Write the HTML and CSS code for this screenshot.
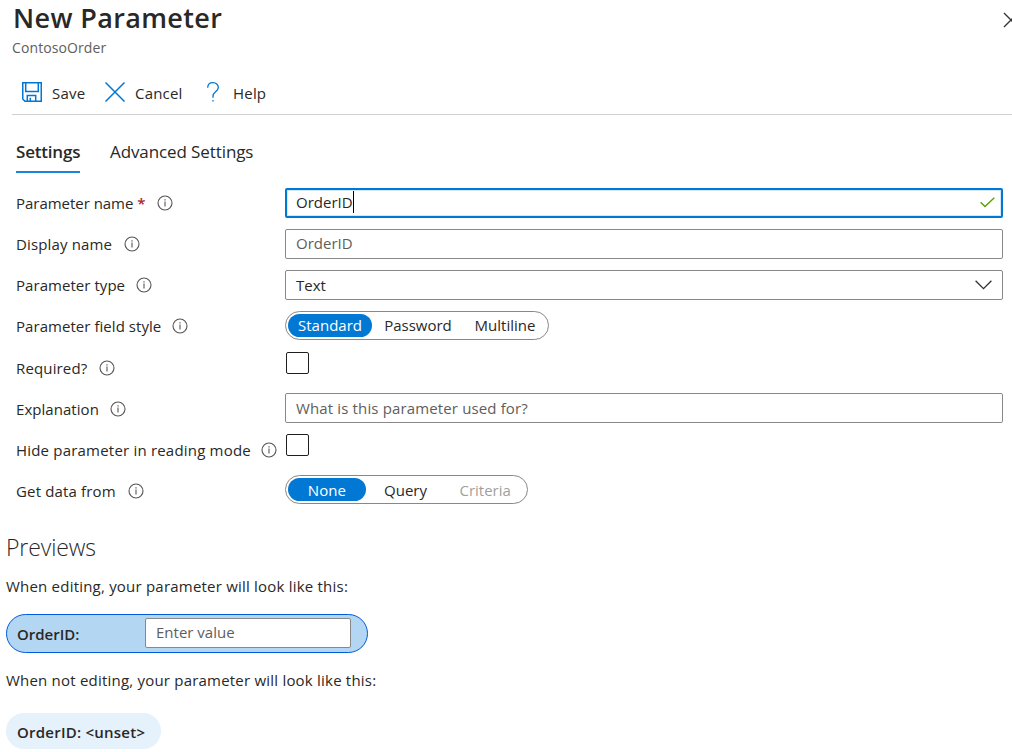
FILE: index.html
```html
<!DOCTYPE html>
<html lang="en">
<head>
<meta charset="utf-8">
<title>New Parameter</title>
<link rel="stylesheet" href="styles.css">
</head>
<body>
<svg class="defs" aria-hidden="true">
  <symbol id="info" viewBox="0 0 16 16"><circle cx="8" cy="8" r="7" fill="none" stroke="#555" stroke-width="1.1"/><path d="M8 6.6V11.4" stroke="#555" stroke-width="1.1"/><path d="M8 4.2V5.5" stroke="#555" stroke-width="1.2"/></symbol>
</svg>
<main class="panel">
  <header class="header">
    <div>
      <h1 class="title">New Parameter</h1>
      <p class="subtitle">ContosoOrder</p>
    </div>
    <svg class="close" width="16" height="16" viewBox="0 0 16 16"><path d="M1 1L15 15M15 1L1 15" stroke="#333" stroke-width="1.3"/></svg>
  </header>
  <nav class="toolbar">
    <button class="tool save"><svg width="20" height="20" viewBox="0 0 20 20" fill="none" stroke="#0078d4" stroke-width="1.5"><path d="M.75 .75H19.25V19.25H3L.75 17Z"/><path d="M3.7 .75V9.4H16.3V.75"/><path d="M5.3 19V13.5H13.7V19M8.3 19V15.7"/></svg><span>Save</span></button>
    <button class="tool cancel"><svg width="20" height="20" viewBox="0 0 20 20"><path d="M.5 .5L19.5 19.5M19.5 .5L.5 19.5" stroke="#0078d4" stroke-width="1.5"/></svg><span>Cancel</span></button>
    <button class="tool help"><svg width="12" height="20" viewBox="0 0 12 20" fill="none" stroke="#0078d4" stroke-width="1.3"><path d="M.7 5.8C.7 2.6 3 .7 6 .7S11.3 2.7 11.3 5.4C11.3 9.3 6 9.6 6 14V15.8M6 18V19.6"/></svg><span>Help</span></button>
  </nav>
  <div class="tabs">
    <span class="tab tab-active">Settings</span>
    <span class="tab tab-advanced">Advanced Settings</span>
  </div>
  <form class="form">
    <div class="row"><div class="label label-name"><span>Parameter name <b class="star">*</b></span><svg class="info"><use href="#info"/></svg></div>
      <div class="field focused"><span>OrderID</span><i class="caret"></i><svg class="check" width="15" height="11" viewBox="0 0 15 11"><path d="M.6 5.2L5 9.6L14.3 .8" fill="none" stroke="#57a300" stroke-width="1.4"/></svg></div></div>
    <div class="row"><div class="label"><span>Display name</span><svg class="info"><use href="#info"/></svg></div>
      <div class="field hint hint-name">OrderID</div></div>
    <div class="row"><div class="label label-type"><span>Parameter type</span><svg class="info"><use href="#info"/></svg></div>
      <div class="field select"><span>Text</span><svg class="chevron" width="17" height="10" viewBox="0 0 17 10"><path d="M.6 .8L8.5 8.7L16.4 .8" fill="none" stroke="#323130" stroke-width="1.3"/></svg></div></div>
    <div class="row"><div class="label label-type"><span>Parameter field style</span><svg class="info"><use href="#info"/></svg></div>
      <div class="pills style-pills"><span class="pill on">Standard</span><span class="pill">Password</span><span class="pill">Multiline</span></div></div>
    <div class="row low"><div class="label"><span>Required?</span><svg class="info"><use href="#info"/></svg></div>
      <div class="checkbox"></div></div>
    <div class="row low"><div class="label label-type"><span>Explanation</span><svg class="info"><use href="#info"/></svg></div>
      <div class="field hint question">What is this parameter used for?</div></div>
    <div class="row low"><div class="label hide-label"><span>Hide parameter in reading mode</span><svg class="info"><use href="#info"/></svg></div>
      <div class="checkbox"></div></div>
    <div class="row low"><div class="label"><span>Get data from</span><svg class="info"><use href="#info"/></svg></div>
      <div class="pills source-pills"><span class="pill on">None</span><span class="pill">Query</span><span class="pill off">Criteria</span></div></div>
  </form>
  <section class="previews">
    <h2 class="heading">Previews</h2>
    <p class="note">When editing, your parameter will look like this:</p>
    <div class="edit-preview"><span class="name">OrderID:</span><div class="field hint value">Enter value</div></div>
    <p class="note note-second">When not editing, your parameter will look like this:</p>
    <div class="read-preview">OrderID: &lt;unset&gt;</div>
  </section>
</main>
</body>
</html>
```
FILE: styles.css
```css
* { box-sizing: border-box; }
body { margin: 0; background: #fff; color: #292827; font: 15px/20px "Open Sans", "Noto Sans", sans-serif; overflow: hidden; }
h1, h2, p { margin: 0; }
.defs { position: absolute; width: 0; height: 0; }
.panel { width: 1012px; height: 752px; overflow: hidden; white-space: nowrap; }
.header { display: flex; justify-content: space-between; height: 72px; padding-left: 12px; }
.title { font-size: 27px; line-height: 36px; font-weight: 600; letter-spacing: .36px; padding-left: 1px; }
.subtitle { font-size: 14px; line-height: 20px; color: #605e5c; margin-top: 2px; letter-spacing: .1px; }
.close { flex: none; margin: 12px -7px 0 0; }
.toolbar { display: flex; height: 43px; margin-left: 12px; padding-left: 10px; border-bottom: 1px solid #d2d0ce; align-items: center; }
.tool { display: flex; align-items: center; gap: 10px; height: 24px; padding: 0; border: 0; background: none; color: inherit; font: inherit; letter-spacing: .2px; }
.tool svg { flex: none; margin-top: -2px; }
.save { width: 83px; }
.cancel { width: 102px; }
.help { gap: 14px; }
.tabs { display: flex; margin: 15px 0 0 16px; font-size: 17px; line-height: 44px; height: 43px; gap: 30px; letter-spacing: -.1px; }
.tab-active { width: 64px; font-weight: 600; border-bottom: 2px solid #1b86d9; letter-spacing: -.2px; }
.form { margin-top: 15px; }
.row { display: flex; height: 41px; align-items: flex-start; }
.label { display: flex; align-items: center; width: 285px; height: 30px; padding-left: 16px; gap: 12px; flex: none; letter-spacing: .15px; }
.label-name { letter-spacing: -.03px; }
.label-type { gap: 11px; letter-spacing: .05px; }
.hide-label { gap: 10px; letter-spacing: .2px; }
.low .label { padding-top: 1px; }
.star { color: #a4262c; font-weight: 600; }
.info { width: 16px; height: 16px; flex: none; }
.field { display: flex; align-items: center; width: 718px; height: 30px; padding: 0 10px; border: 1px solid #8a8886; border-radius: 2px; background: #fff; }
.focused { border: 2px solid #0078d4; box-shadow: inset 0 0 0 1px #d3e7f8; padding: 0 6px 2px 9px; }
.hint { color: #605e5c; padding-bottom: 1px; }
.hint-name { padding-bottom: 2px; }
.question { letter-spacing: .14px; }
.caret { width: 1px; height: 22px; background: #000; }
.check, .chevron { margin-left: auto; }
.pills { display: flex; align-items: center; height: 29px; padding: 0 2px; border: 1px solid #8a8886; border-radius: 15px; }
.style-pills { width: 264px; }
.source-pills { width: 243px; }
.pill { height: 23px; line-height: 22px; text-align: center; border-radius: 12px; }
.on { background: #0078d4; color: #fff; }
.style-pills .pill { width: 84px; }
.style-pills .pill:nth-child(2) { width: 92px; }
.style-pills .pill:nth-child(3) { width: 82px; }
.source-pills .pill { width: 78px; line-height: 24px; }
.source-pills .pill:nth-child(2) { width: 80px; }
.source-pills .off { color: #a19f9d; width: 80px; }
.checkbox { width: 23px; height: 22px; margin-left: 1px; border: 1px solid #201f1e; border-radius: 2px; }
.previews { padding: 15px 0 0 6px; }
.heading { font-size: 23px; line-height: 32px; font-weight: 300; letter-spacing: -.1px; }
.note { margin-top: 13px; line-height: 20px; letter-spacing: .21px; }
.edit-preview { display: flex; align-items: center; width: 362px; height: 39px; margin-top: 18px; padding: 0 0 2px 10px; background: #b3d6f2; border: 1px solid #015cda; border-radius: 20px; }
.name { width: 128px; font-weight: 600; padding-top: 2px; }
.value { width: 206px; }
.note-second { margin-top: 17px; }
.read-preview { width: 155px; height: 36px; margin-top: 23px; padding: 1px 0 0 11px; line-height: 36px; background: #e5f1fb; border-radius: 18px; font-weight: 600; letter-spacing: .24px; }
```
